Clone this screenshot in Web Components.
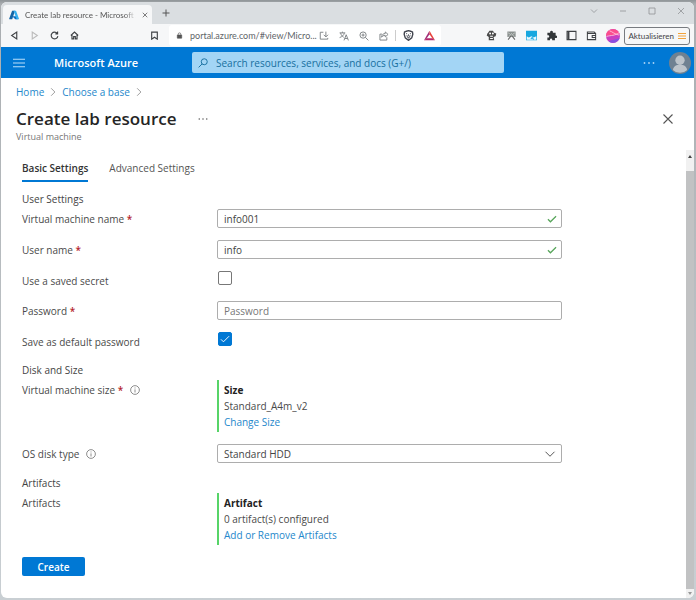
<!DOCTYPE html>
<html lang="en">
<head>
<meta charset="utf-8">
<title>Create lab resource - Microsoft Azure</title>
<style>
  html, body {
    margin: 0;
    min-height: 100vh;
  }
  body {
    display: flex;
    font-family: "Open Sans", "Noto Sans", sans-serif;
    font-size: 10px;
    line-height: 16px;
    color: #4a4a4a;
    background: linear-gradient(#8f9598, #a9adb0 4px, #c9cfd3);
    --blue: #0078d4;
    --link: #2487cb;
    --line: #adadad;
    --chrome-font: Lato, Roboto, sans-serif;
  }
</style>
</head>
<body>
<browser-window>
  <tab-strip slot="chrome">Create lab resource - Microsoft Azure</tab-strip>
  <tool-bar slot="chrome"></tool-bar>
  <portal-header></portal-header>
  <blade-header heading="Create lab resource" subtitle="Virtual machine"></blade-header>
  <scroll-pane>
    <lab-form></lab-form>
  </scroll-pane>
</browser-window>

<script>
const icons = {
  azure: `<path d="M5.600 1h4L5.300 14.200a.8.800 0 0 1-.8.600H1.200a.8.800 0 0 1-.8-1.100L4.800 1.600a.8.800 0 0 1 .8-.6z" fill="#1465a5" stroke="none"/><path d="M11.800 10H5.200l4.400 4.500c.2.2.4.3.7.3h3.800z" fill="#0a6fc4" stroke="none"/><path d="M6.600 1h4c.4 0 .7.2.8.6l4.400 12.100a.8.800 0 0 1-.8 1.100h-4c.7 0 1-.6.8-1.100L7.400 1.600c-.1-.4-.4-.6-.8-.6z" fill="#35b0ee" stroke="none"/>`,
  close: `<path d="M2 2l12 12M14 2L2 14"/>`,
  plus: `<path d="M8 1v14M1 8h14"/>`,
  down: `<path d="M2 5l6 6 6-6"/>`,
  right: `<path d="M5 2l6 6-6 6"/>`,
  minimize: `<path d="M2 8h12"/>`,
  maximize: `<path d="M2 2h12v12H2z"/>`,
  back: `<path d="M12 2v12L3 8z"/>`,
  forward: `<path d="M4 2v12l9-6z"/>`,
  reload: `<path d="M13 4.500A6 6 0 1 0 14 9M13.500 1v4h-4"/>`,
  home: `<path d="M1.500 8L8 2l6.500 6M3.500 7v7h3v-4h3v4h3V7"/>`,
  bookmark: `<path d="M3 2h10v12.500L8 11l-5 3.500z"/>`,
  lock: `<path d="M3 7h10v7H3z" fill="currentColor"/><path d="M5 7V5a3 3 0 0 1 6 0v2"/>`,
  install: `<path d="M7 2H2v11h12v-2M11 1v8M7.500 6L11 9.500 14.500 6"/>`,
  translate: `<path d="M1 3h9M5.500 1v2M2.500 3c1 4 3 6 5 7M8.500 3C8 7 5 9 1 10.500M8 15l3.500-9L15 15M9.200 12h4.600"/>`,
  zoom: `<circle cx="6.500" cy="6.500" r="5"/><path d="M10.200 10.200L15 15M4 6.500h5M6.500 4v5"/>`,
  share: `<path d="M5 5H1.500v9.500h11V10M10 1.500L14.500 5.500 10 9.500V7C7 7 5.500 8 4 10c.3-4 3-6 6-6z"/>`,
  shield: `<path d="M8 1l3 .8L13.800 3l.5 3-1.600 5.500L8 15l-4.700-3.500L1.700 6l.5-3L5 1.800z" stroke="#42454f" stroke-width="2"/><path d="M4.500 5l1.500.6M11.500 5L10 5.600M8 6v3M5.500 7.500l1.200 3L8 11.700l1.300-1.200 1.200-3" stroke="#686b74"/>`,
  bat: `<g stroke="none"><path d="M8 1L0 15l4-3 4-6z" fill="#a12d78"/><path d="M8 1l8 14-4-3-4-6z" fill="#e8433c"/><path d="M0 15h16l-4-3H4z" fill="#b3286a"/></g>`,
  penguin: `<path d="M3 4l2-3h5l2 3 3 1-1 4-3 1 1 5H4V10L1 8l1-3z" fill="#4b4b4b" stroke="none"/><circle cx="6" cy="5" r="1.400" fill="#fff" stroke="none"/><circle cx="10" cy="5" r="1.400" fill="#fff" stroke="none"/><path d="M6 9h4M6 12.500h4" stroke="#fff"/>`,
  badge: `<path d="M2 2h12v8H2z" fill="#8b918f" stroke="none"/><path d="M4 10l4-5 4 5M3 4l3 2M13 4l-3 2" stroke="#d5dad8" stroke-width="1"/><path d="M3 14l4-5M9 9l4 5" stroke="#666"/>`,
  picture: `<path d="M0 1h16v14H0z" fill="#17a7df" stroke="none"/><path d="M1 9l3 2 4-2 3 2 4-2v5H1z" fill="#e9f8ff" stroke="none"/><path d="M7 13l2-2 2 3" stroke="#17a7df"/>`,
  puzzle: `<path d="M2 4h4V3a2 2 0 0 1 4 0v1h4v4h.4a1.800 1.800 0 0 1 0 3.600H13V15H9v-1.200a1.600 1.600 0 0 0-3.200 0V15H2v-4h1a1.700 1.700 0 0 0 0-3.400H2z" fill="#323639" stroke="none"/>`,
  sidebar: `<path d="M1.500 2h13v12h-13z"/><path d="M3.500 3v10" stroke-width="3"/>`,
  wallet: `<path d="M2 3h10l2 2v9H2zM2 5h12M9 8h5v3H9z"/>`,
  orb: `<g stroke="none"><circle cx="8" cy="8" r="8" fill="#c93fc0"/><path d="M0 8a8 8 0 0 1 15.500-2.500C11 8 5 7 0 8z" fill="#fb4d8d"/><path d="M3 14.200C7 12 13 12 15.500 10A8 8 0 0 1 3 14.200z" fill="#8651df"/></g><path d="M.5 8.500C6 7 10 8 15 4M4 2c3 1 6 4 11 5" stroke="#ffc4dc" stroke-width="1"/>`,
  menu: `<path d="M0 3h16M0 8h16M0 13h16"/>`,
  search: `<circle cx="10" cy="6" r="4.800"/><path d="M6.500 9.500L1 15"/>`,
  dots: `<g fill="currentColor" stroke="none"><circle cx="2" cy="8" r="1.200"/><circle cx="8" cy="8" r="1.200"/><circle cx="14" cy="8" r="1.200"/></g>`,
  avatar: `<g stroke="none"><circle cx="8" cy="8" r="8" fill="#6f8191"/><circle cx="8" cy="6" r="3.400" fill="#bdc4ca"/><path d="M2.800 13c.6-3 2.700-3.800 5.200-3.800s4.600.8 5.200 3.800A7.500 7.500 0 0 1 2.800 13z" fill="#bdc4ca"/></g>`,
  check: `<path d="M1.500 8.500L5.500 12.500 14.500 3.500"/>`,
  info: `<circle cx="8" cy="8" r="7"/><path d="M8 7v5M8 4v1.500"/>`,
};

const define = (name, html, setup) => {
  const template = document.createElement("template");
  template.innerHTML = html;
  customElements.define(name, class extends HTMLElement {
    constructor() {
      super();
      this.attachShadow({ mode: "open" });
      this.shadowRoot.appendChild(template.content.cloneNode(true));
    }
    connectedCallback() {
      if (setup) setup(this, this.shadowRoot);
    }
  });
};

define("ui-icon", `
<style>
:host { display: inline-flex; flex: none; width: var(--size, 10px); height: var(--size, 10px); }
svg { width: 100%; height: 100%; fill: none; stroke: currentColor; stroke-width: var(--stroke, 1.5); }
</style>
<svg viewBox="0 0 16 16" aria-hidden="true"></svg>
`, (el, root) => {
  root.querySelector("svg").innerHTML = icons[el.getAttribute("name")];
});

define("browser-window", `
<style>
:host { display: flex; flex: 1; min-width: 0; }
main {
  flex: 1;
  min-width: 0;
  display: flex;
  flex-direction: column;
  margin: 2px 2px 2px 1px;
  background: #fff;
  border-radius: 6px;
  overflow: hidden;
}
</style>
<main>
  <slot name="chrome"></slot>
  <slot></slot>
</main>
`);

define("tab-strip", `
<style>
:host { display: flex; height: 22px; background: #dadee1; color: #555; }
.tab {
  display: flex;
  align-items: center;
  gap: 6px;
  width: 139px;
  margin: 3px 0 0 2px;
  padding: 0 4px 0 6px;
  background: #f6f7f8;
  border-radius: 4px 4px 0 0;
  font-family: var(--chrome-font);
  font-size: 8px;
}
.tab span {
  flex: 1;
  overflow: hidden;
  white-space: nowrap;
  mask-image: linear-gradient(to right, #000 90%, transparent);
}
button { display: flex; align-items: center; justify-content: center; border: 0; padding: 0; background: none; color: inherit; }
.close { --size: 6px; --stroke: 2; }
.new { width: 28px; --size: 8px; --stroke: 2; }
.controls { display: flex; gap: 19px; margin-left: auto; padding: 0 8px 4px 0; --size: 8px; --stroke: 1.5; color: #8c8f91; }
.controls button { width: 10px; }
</style>
<div class="tab">
  <ui-icon name="azure"></ui-icon>
  <span><slot></slot></span>
  <button class="close" aria-label="Close tab"><ui-icon name="close"></ui-icon></button>
</div>
<button class="new" aria-label="New tab"><ui-icon name="plus"></ui-icon></button>
<div class="controls">
  <button aria-label="Search tabs"><ui-icon name="down"></ui-icon></button>
  <button aria-label="Minimize"><ui-icon name="minimize"></ui-icon></button>
  <button aria-label="Maximize"><ui-icon name="maximize"></ui-icon></button>
  <button aria-label="Close"><ui-icon name="close"></ui-icon></button>
</div>
`);

define("tool-bar", `
<style>
:host { display: flex; align-items: center; height: 23px; background: #f6f7f8; color: #3f4245; font-family: var(--chrome-font); }
button { display: flex; align-items: center; justify-content: center; border: 0; padding: 0; background: none; color: inherit; font: inherit; }
.nav { display: flex; flex: none; gap: 10px; padding-left: 8px; --size: 9px; --stroke: 2; }
.nav button { width: 10px; }
.nav button:nth-child(2) { color: #bbb; }
.save { margin-left: 71px; --size: 9px; --stroke: 2; }
.address {
  flex: none;
  display: flex;
  align-items: center;
  width: 272px;
  height: 21px;
  margin: 0 0 0 10px;
  background: #fff;
  border-radius: 3px;
  color: #7d8184;
}
.address > ui-icon { --size: 7px; margin-left: 7px; color: #555; }
input { width: 129px; min-width: 0; box-sizing: border-box; border: 0; padding: 0; margin: 0 0 0 7px; background: none; color: #606468; font: inherit; font-size: 9px; }
.actions { display: flex; gap: 10px; }
.tracking { display: flex; gap: 10px; margin-left: 6px; padding-left: 7px; border-left: 1px solid #ccc; }
.tracking button { --size: 11px; }
.extensions { display: flex; align-items: center; gap: 9px; margin-left: auto; padding-right: 4px; --size: 11px; }
.extensions .orb { --size: 14px; }
.update {
  flex: none;
  gap: 4px;
  height: 18px;
  margin-right: 4px;
  padding: 0 3px;
  border: 1px solid #777b80;
  border-radius: 3px;
  font-size: 8px;
}
.update ui-icon { --size: 8px; --stroke: 2; color: #f2a33c; }
</style>
<div class="nav">
  <button aria-label="Back"><ui-icon name="back"></ui-icon></button>
  <button aria-label="Forward" disabled><ui-icon name="forward"></ui-icon></button>
  <button aria-label="Reload"><ui-icon name="reload"></ui-icon></button>
  <button aria-label="Home"><ui-icon name="home"></ui-icon></button>
</div>
<button class="save" aria-label="Bookmark"><ui-icon name="bookmark"></ui-icon></button>
<div class="address">
  <ui-icon name="lock"></ui-icon>
  <input aria-label="Address" value="portal.azure.com/#view/Micro...">
  <div class="actions">
    <button aria-label="Install"><ui-icon name="install"></ui-icon></button>
    <button aria-label="Translate"><ui-icon name="translate"></ui-icon></button>
    <button aria-label="Zoom"><ui-icon name="zoom"></ui-icon></button>
    <button aria-label="Share"><ui-icon name="share"></ui-icon></button>
  </div>
  <div class="tracking">
    <button aria-label="Shields"><ui-icon name="shield"></ui-icon></button>
    <button aria-label="Rewards"><ui-icon name="bat"></ui-icon></button>
  </div>
</div>
<div class="extensions">
  <button aria-label="Penguin"><ui-icon name="penguin"></ui-icon></button>
  <button aria-label="Badge"><ui-icon name="badge"></ui-icon></button>
  <button aria-label="Picture"><ui-icon name="picture"></ui-icon></button>
  <button aria-label="Extensions"><ui-icon name="puzzle"></ui-icon></button>
  <button aria-label="Sidebar"><ui-icon name="sidebar"></ui-icon></button>
  <button aria-label="Wallet"><ui-icon name="wallet"></ui-icon></button>
  <button class="orb" aria-label="Profile"><ui-icon name="orb"></ui-icon></button>
</div>
<button class="update">Aktualisieren <ui-icon name="menu"></ui-icon></button>
`);

define("portal-header", `
<style>
:host { display: grid; grid-template-columns: 191px minmax(0, 312px) 1fr; align-items: center; height: 31px; background: var(--blue); color: #fff; }
button { display: flex; border: 0; padding: 0; background: none; color: inherit; }
.brand { display: flex; align-items: center; gap: 29px; padding-left: 12px; }
.brand a { color: inherit; font-size: 11px; font-weight: 600; text-decoration: none; }
.brand button { --size: 12px; --stroke: 1.5; color: #b9defa; }
.search { display: flex; align-items: center; gap: 8px; height: 21px; padding: 0 6px; background: #a3d5f5; border-radius: 2px; color: #176f9f; }
input { flex: 1; min-width: 0; border: 0; padding: 0; background: none; font: inherit; color: inherit; }
input::placeholder { color: inherit; opacity: 1; }
.account { display: flex; align-items: center; justify-content: flex-end; gap: 14px; padding-right: 3px; color: #a9d4f5; }
.account button:first-child { --size: 12px; }
.account button:last-child { --size: 22px; }
</style>
<div class="brand">
  <button aria-label="Portal menu"><ui-icon name="menu"></ui-icon></button>
  <a href="#">Microsoft Azure</a>
</div>
<label class="search">
  <ui-icon name="search"></ui-icon>
  <input type="search" aria-label="Search" placeholder="Search resources, services, and docs (G+/)">
</label>
<div class="account">
  <button aria-label="More"><ui-icon name="dots"></ui-icon></button>
  <button aria-label="Account"><ui-icon name="avatar"></ui-icon></button>
</div>
`);

define("blade-header", `
<style>
:host { display: block; padding: 6px 20px 7px 15px; }
nav { display: flex; align-items: center; gap: 4px; --size: 10px; --stroke: 1.5; color: #999; }
a { color: var(--link); text-decoration: none; }
.row { display: flex; align-items: center; gap: 22px; height: 24px; margin-top: 7px; }
h1 { margin: 0; font-size: 17px; font-weight: 600; line-height: 24px; color: #252525; }
button { display: flex; border: 0; padding: 0; background: none; color: #555; }
.close { margin-left: auto; --size: 12px; --stroke: 1.5; }
p { margin: 0; font-size: 9px; line-height: 12px; color: #777; }
</style>
<nav aria-label="Breadcrumb">
  <a href="#">Home</a><ui-icon name="right"></ui-icon>
  <a href="#">Choose a base</a><ui-icon name="right"></ui-icon>
</nav>
<div class="row">
  <h1></h1>
  <button aria-label="More"><ui-icon name="dots"></ui-icon></button>
  <button class="close" aria-label="Close"><ui-icon name="close"></ui-icon></button>
</div>
<p></p>
`, (el, root) => {
  root.querySelector("h1").textContent = el.getAttribute("heading");
  root.querySelector("p").textContent = el.getAttribute("subtitle");
});

define("scroll-pane", `
<style>
:host { display: flex; flex: 1; }
.content { flex: 1; min-width: 0; }
.bar { display: flex; flex-direction: column; width: 8px; background: #f1f1f1; }
.bar i { width: 0; margin: 5px auto; border: 2px solid transparent; border-top: 0; border-bottom: 3px solid #444; }
.bar i:last-child { border-bottom: 0; border-top: 3px solid #999; margin: 3px auto; }
.thumb { flex: 1; margin-top: 8px; background: #c1c2c3; }
</style>
<div class="content"><slot></slot></div>
<div class="bar" aria-hidden="true"><i></i><div class="thumb"></div><i></i></div>
`);

define("form-row", `
<style>
:host { display: grid; grid-template-columns: 195px minmax(0, 1fr); margin-bottom: 12px; }
.label { display: flex; align-items: center; box-sizing: border-box; height: 18px; padding-top: 2px; gap: 7px; --size: 10px; --stroke: 1; }
:host([required]) .mark::after { content: " *"; color: #b4232c; font-weight: 600; }
:host(:not([info])) ui-icon { display: none; }
</style>
<div class="label"><span class="mark"><slot name="label"></slot></span><ui-icon name="info"></ui-icon></div>
<slot></slot>
`);

define("summary-card", `
<style>
:host { display: block; min-height: 48px; padding: 2px 5px; border-left: 2px solid #57d468; }
strong { display: block; color: #222; font-weight: 700; }
p { margin: 0; }
a { color: var(--link); text-decoration: none; }
</style>
<strong></strong>
<p><slot></slot></p>
<a href="#"></a>
`, (el, root) => {
  root.querySelector("strong").textContent = el.getAttribute("heading");
  root.querySelector("a").textContent = el.getAttribute("action");
});

define("lab-form", `
<style>
:host { display: block; max-width: 540px; padding: 10px 12px 0 21px; }
.tabs { display: flex; gap: 21px; margin-bottom: 9px; }
.tabs button { border: 0; border-bottom: 2px solid transparent; padding: 0 0 4px; background: none; font: inherit; color: #555; }
.tabs button[aria-selected="true"] { border-color: var(--blue); color: #333; font-weight: 600; }
h2 { margin: 0 0 2px; font-size: 10px; line-height: 16px; font-weight: 400; color: #444; }
.box { display: grid; align-items: center; color: #444; }
.box > * { grid-area: 1 / 1; }
.box ui-icon { justify-self: end; margin-right: 6px; pointer-events: none; --size: 12px; --stroke: 1.2; }
.box ui-icon[name="check"] { margin-right: 5px; color: #57a55a; --size: 10px; --stroke: 2; }
.box input, select {
  width: 100%;
  height: 19px;
  box-sizing: border-box;
  border: 1px solid var(--line);
  border-radius: 2px;
  padding: 0 6px;
  background: #fff;
  font: inherit;
  color: inherit;
  appearance: none;
}
.box input::placeholder { color: #777; opacity: 1; }
.tick { display: grid; width: 14px; height: 14px; margin-left: 1px; align-items: center; justify-items: center; }
.tick > * { grid-area: 1 / 1; }
.tick input { appearance: none; width: 14px; height: 14px; box-sizing: border-box; margin: 0; border: 1px solid #777; border-radius: 2px; }
.tick input:checked { border-color: var(--blue); background: var(--blue); }
.tick ui-icon { color: #fff; pointer-events: none; }
.create { width: 63px; height: 19px; border: 0; border-radius: 2px; background: var(--blue); color: #fff; font: inherit; font-weight: 600; }
</style>
<div class="tabs" role="tablist">
  <button role="tab" aria-selected="true">Basic Settings</button>
  <button role="tab" aria-selected="false">Advanced Settings</button>
</div>
<form onsubmit="return false">
  <h2>User Settings</h2>
  <form-row required>
    <label slot="label" for="vm-name">Virtual machine name</label>
    <div class="box"><input id="vm-name" value="info001"><ui-icon name="check"></ui-icon></div>
  </form-row>
  <form-row required>
    <label slot="label" for="user-name">User name</label>
    <div class="box"><input id="user-name" value="info"><ui-icon name="check"></ui-icon></div>
  </form-row>
  <form-row>
    <label slot="label" for="secret">Use a saved secret</label>
    <div class="tick"><input id="secret" type="checkbox"></div>
  </form-row>
  <form-row required>
    <label slot="label" for="password">Password</label>
    <div class="box"><input id="password" type="password" placeholder="Password"></div>
  </form-row>
  <form-row>
    <label slot="label" for="default-password">Save as default password</label>
    <div class="tick"><input id="default-password" type="checkbox" checked><ui-icon name="check"></ui-icon></div>
  </form-row>
  <h2>Disk and Size</h2>
  <form-row required info>
    <span slot="label">Virtual machine size</span>
    <summary-card heading="Size" action="Change Size">Standard_A4m_v2</summary-card>
  </form-row>
  <form-row info>
    <label slot="label" for="disk">OS disk type</label>
    <div class="box">
      <select id="disk"><option>Standard HDD</option></select>
      <ui-icon name="down"></ui-icon>
    </div>
  </form-row>
  <h2>Artifacts</h2>
  <form-row>
    <span slot="label">Artifacts</span>
    <summary-card heading="Artifact" action="Add or Remove Artifacts">0 artifact(s) configured</summary-card>
  </form-row>
  <button class="create">Create</button>
</form>
`);
</script>
</body>
</html>
